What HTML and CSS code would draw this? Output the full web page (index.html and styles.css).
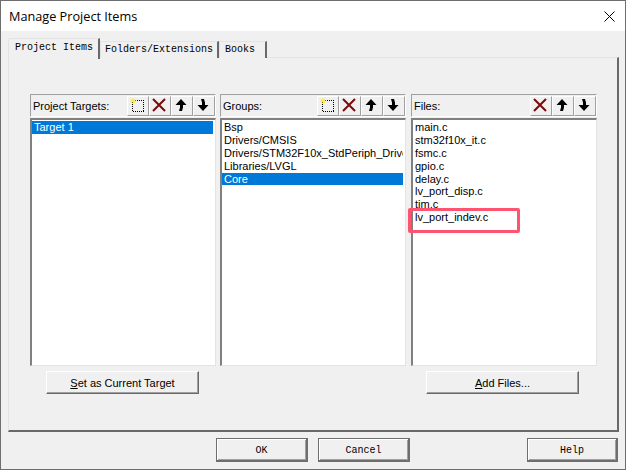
FILE: index.html
```html
<!DOCTYPE html>
<html lang="en">
<head>
  <meta charset="UTF-8">
  <title>Manage Project Items</title>
  <link rel="stylesheet" href="styles.css">
</head>
<body>
<svg class="defs" width="0" height="0">
  <symbol id="i-new" viewBox="0 0 16 16">
    <rect x="3.5" y="3.5" width="11" height="11" fill="none" stroke="#000" stroke-dasharray="1 1" shape-rendering="crispEdges"/>
    <path d="M4 1v6M1 4h6M2 2l4 4M6 2L2 6" stroke="#ffe83a" stroke-width="1"/>
  </symbol>
  <symbol id="i-del" viewBox="0 0 16 16">
    <path d="M2 2l12 12M14 2L2 14" stroke="#7b0a0a" stroke-width="2" fill="none"/>
  </symbol>
  <symbol id="i-up" viewBox="0 0 16 16">
    <path d="M8 2l5.500 6H10v2.500L9 14H6l1-3.500V8H2.500z" fill="#000"/>
  </symbol>
  <symbol id="i-down" viewBox="0 0 16 16">
    <path d="M8 14l5.500-6H10V5.500L9 2H6l1 3.500V8H2.500z" fill="#000"/>
  </symbol>
</svg>

<div class="window">
  <div class="titlebar">
    <span class="title">Manage Project Items</span>
    <svg class="close" width="11" height="11" viewBox="0 0 11 11"><path d="M.5.5l10 10M10.500.5l-10 10" stroke="#000" fill="none"/></svg>
  </div>

  <div class="tabs">
    <div class="tab active">Project Items</div>
    <div class="tab">Folders/Extensions</div>
    <div class="tab last">Books</div>
  </div>

  <div class="panel">
    <div class="col">
      <div class="col-head">
        <span class="col-label">Project Targets:</span>
        <button class="tool"><svg width="16" height="16"><use href="#i-new"/></svg></button>
        <button class="tool"><svg width="16" height="16"><use href="#i-del"/></svg></button>
        <button class="tool"><svg width="16" height="16"><use href="#i-up"/></svg></button>
        <button class="tool"><svg width="16" height="16"><use href="#i-down"/></svg></button>
      </div>
      <div class="list">
        <div class="row selected">Target 1</div>
      </div>
      <button class="btn"><u>S</u>et as Current Target</button>
    </div>

    <div class="col">
      <div class="col-head">
        <span class="col-label">Groups:</span>
        <button class="tool"><svg width="16" height="16"><use href="#i-new"/></svg></button>
        <button class="tool"><svg width="16" height="16"><use href="#i-del"/></svg></button>
        <button class="tool"><svg width="16" height="16"><use href="#i-up"/></svg></button>
        <button class="tool"><svg width="16" height="16"><use href="#i-down"/></svg></button>
      </div>
      <div class="list">
        <div class="row">Bsp</div>
        <div class="row">Drivers/CMSIS</div>
        <div class="row">Drivers/STM32F10x_StdPeriph_Driver</div>
        <div class="row">Libraries/LVGL</div>
        <div class="row selected">Core</div>
      </div>
    </div>

    <div class="col files">
      <div class="col-head">
        <span class="col-label">Files:</span>
        <button class="tool"><svg width="16" height="16"><use href="#i-del"/></svg></button>
        <button class="tool"><svg width="16" height="16"><use href="#i-up"/></svg></button>
        <button class="tool"><svg width="16" height="16"><use href="#i-down"/></svg></button>
      </div>
      <div class="list">
        <div class="row">main.c</div>
        <div class="row">stm32f10x_it.c</div>
        <div class="row">fsmc.c</div>
        <div class="row">gpio.c</div>
        <div class="row">delay.c</div>
        <div class="row">lv_port_disp.c</div>
        <div class="row">tim.c</div>
        <div class="row">lv_port_indev.c</div>
        <div class="mark"></div>
      </div>
      <button class="btn"><u>A</u>dd Files...</button>
    </div>
  </div>

  <div class="footer">
    <button class="btn-mono">OK</button>
    <button class="btn-mono">Cancel</button>
    <button class="btn-mono help">Help</button>
  </div>
</div>
</body>
</html>
```

FILE: styles.css
```css
html, body {
  margin: 0;
  padding: 0;
}
body {
  width: 626px;
  height: 470px;
  overflow: hidden;
  font-family: "Liberation Sans", Arial, sans-serif;
  font-size: 11px;
  color: #000;
}
.defs {
  position: absolute;
}
button {
  margin: 0;
  padding: 0;
  color: #000;
  background-color: #f0f0f0;
}
.window {
  box-sizing: border-box;
  width: 626px;
  height: 470px;
  display: flex;
  flex-direction: column;
  background-color: #f0f0f0;
  border: 1px solid #6e6e6e;
}
.titlebar {
  height: 30px;
  flex: none;
  display: flex;
  align-items: center;
  justify-content: space-between;
  padding: 0 10px 0 8px;
  background-color: white;
}
.title {
  font-family: "Open Sans", sans-serif;
  font-size: 12.700px;
}
.tabs {
  height: 26px;
  flex: none;
  display: flex;
  align-items: flex-end;
  padding-left: 7px;
  font-family: "Liberation Mono", monospace;
  font-size: 10px;
  position: relative;
  z-index: 1;
}
.tab {
  box-sizing: border-box;
  height: 17px;
  padding: 0 4px;
  line-height: 15px;
  margin-bottom: -1px;
  background-color: #f0f0f0;
  border-top: 1px solid #e3e3e3;
  border-left: 1px solid #e3e3e3;
  border-right: 2px solid #696969;
}
.tab.active {
  height: 21px;
  line-height: 18px;
  padding: 0 5px 0 6px;
  margin-bottom: -2px;
  border-top-left-radius: 2px;
}
.tab.last {
  padding: 0 10px 0 5px;
}
.panel {
  box-sizing: border-box;
  width: 611px;
  height: 375px;
  flex: none;
  margin-left: 7px;
  padding: 36px 0 0 21px;
  display: grid;
  grid-template-columns: 186px 186px 187px;
  column-gap: 4px;
  border-top: 1px solid #e3e3e3;
  border-left: 1px solid #e3e3e3;
  border-right: 2px solid #696969;
  border-bottom: 2px solid #696969;
}
.col {
  display: flex;
  flex-direction: column;
}
.col.files {
  margin-left: 1px;
}
.col-head {
  box-sizing: border-box;
  height: 23px;
  display: flex;
  align-items: center;
  padding: 1px 0 1px 2px;
  border-top: 1px solid #a0a0a0;
  border-left: 1px solid #a0a0a0;
  border-right: 1px solid #fff;
  border-bottom: 1px solid #fff;
}
.col-label {
  flex: 1;
}
.tool {
  box-sizing: border-box;
  width: 22px;
  height: 20px;
  padding: 0 2px 1px 0;
  display: flex;
  align-items: center;
  justify-content: center;
  border: none;
  border-top: 1px solid #fff;
  border-left: 1px solid #fff;
  border-right: 1px solid #a0a0a0;
  border-bottom: 1px solid #a0a0a0;
}
.list {
  box-sizing: border-box;
  height: 248px;
  margin-top: 1px;
  padding: 1px 2px 0 0;
  position: relative;
  background-color: white;
  border-top: 2px solid #808080;
  border-left: 2px solid #808080;
  border-right: 1px solid #e3e3e3;
  border-bottom: 1px solid #e3e3e3;
}
.row {
  height: 12.900px;
  line-height: 13px;
  padding-left: 2px;
  white-space: nowrap;
  overflow: hidden;
}
.row.selected {
  color: white;
  background-color: #0078d7;
}
.mark {
  position: absolute;
  left: -5px;
  top: 88px;
  width: 106px;
  height: 19px;
  border: 3px solid #ff5370;
  border-radius: 2px;
}
.btn {
  box-sizing: border-box;
  width: 153px;
  height: 23px;
  margin: 5px 0 0 16px;
  font-family: "Liberation Sans", Arial, sans-serif;
  font-size: 11px;
  border: none;
  border-top: 1px solid #fff;
  border-left: 1px solid #fff;
  border-right: 1px solid #696969;
  border-bottom: 1px solid #696969;
  box-shadow: inset -1px -1px #a0a0a0;
}
.files .btn {
  margin-left: 15px;
}
.footer {
  flex: 1;
  display: flex;
  align-items: flex-start;
  gap: 10px;
  padding: 6px 7px 0 215px;
}
.btn-mono {
  box-sizing: border-box;
  width: 92px;
  height: 24px;
  padding-top: 1px;
  font-family: "Liberation Mono", monospace;
  font-size: 10px;
  border: 1px solid #6e6e6e;
  border-right-width: 2px;
  border-bottom-width: 2px;
  box-shadow: inset 1px 1px #fff, inset -1px -1px #a0a0a0;
}
.help {
  width: 91px;
  margin-left: auto;
}
```
